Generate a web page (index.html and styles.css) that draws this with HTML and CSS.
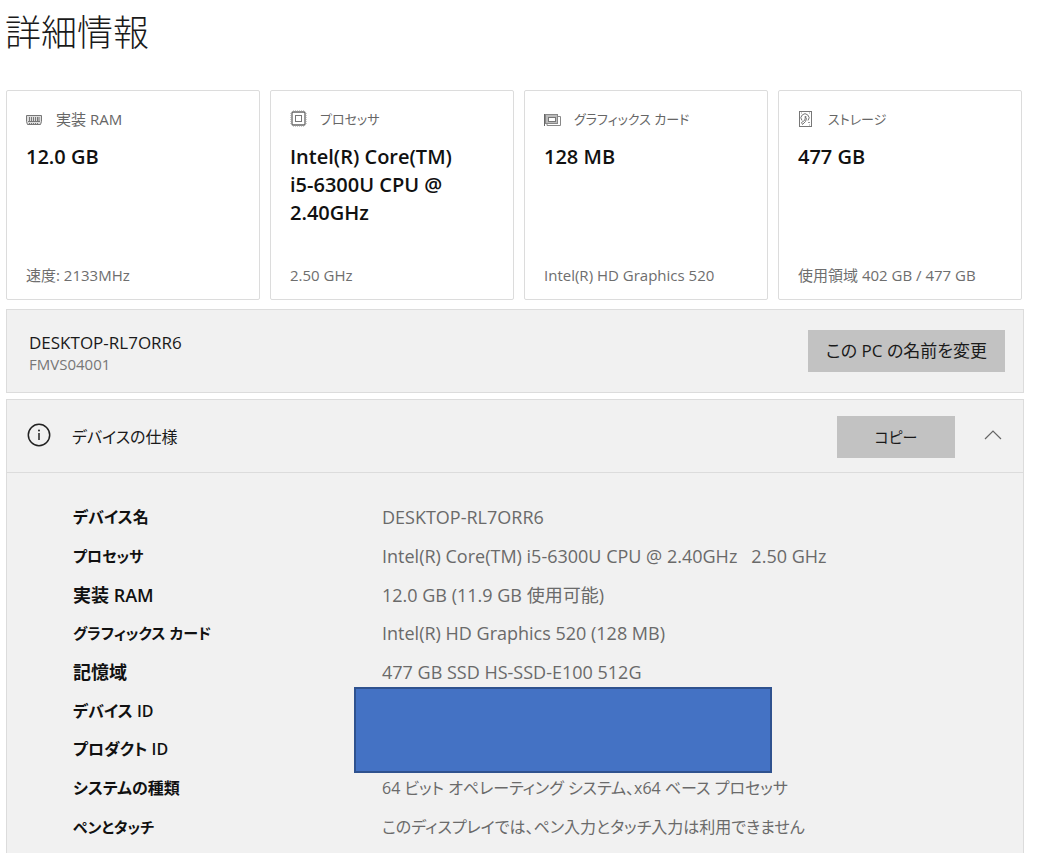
FILE: index.html
```html
<!DOCTYPE html>
<html lang="ja">
<head>
<meta charset="utf-8">
<meta name="viewport" content="width=device-width, initial-scale=1">
<title>詳細情報</title>
<link rel="stylesheet" href="styles.css">
</head>
<body>
<main class="page">
  <h1 class="title">詳細情報</h1>

  <section class="cards">
    <article class="card">
      <h2 class="card-label">
        <svg class="icon" viewBox="0 0 18 18" aria-hidden="true"><path d="M.5 5.500h15v6l-1 3h-13l-1-3z" fill="#ddd" stroke="#777"/><path d="M3.500 7v4M5.500 7v4M7.500 7v4M9.500 7v4M11.500 7v4M13 7v4M2 11.500h12M3.500 13v1M5.500 13v1M7.500 13v1M9.500 13v1M11.500 13v1" fill="none" stroke="#777"/></svg>
        <span>実装 RAM</span>
      </h2>
      <p class="card-value">12.0 GB</p>
      <p class="card-note">速度: 2133MHz</p>
    </article>
    <article class="card">
      <h2 class="card-label kana">
        <svg class="icon" viewBox="0 0 18 18" aria-hidden="true"><rect x="2" y="2" width="13" height="13" rx="1" fill="none" stroke="#666" stroke-width="1.3"/><rect x="5.500" y="5.500" width="6" height="6" fill="none" stroke="#777"/><path d="M3 1h11M3 16h11M1 3v11M16 3v11" fill="none" stroke="#999" stroke-dasharray="1 1"/></svg>
        <span>プロセッサ</span>
      </h2>
      <p class="card-value">Intel(R) Core(TM)<br>i5-6300U CPU @ 2.40GHz</p>
      <p class="card-note">2.50 GHz</p>
    </article>
    <article class="card">
      <h2 class="card-label kana">
        <svg class="icon" viewBox="0 0 18 18" aria-hidden="true"><path d="M.5 4v12" fill="none" stroke="#666"/><rect x="1.500" y="4.500" width="12" height="9" fill="#bbb" stroke="#888"/><rect x="4.500" y="7.500" width="7" height="4" fill="#fff" stroke="#777"/><path d="M14 6.500h2.500v9H3V14" fill="none" stroke="#888"/></svg>
        <span>グラフィックス カード</span>
      </h2>
      <p class="card-value">128 MB</p>
      <p class="card-note">Intel(R) HD Graphics 520</p>
    </article>
    <article class="card">
      <h2 class="card-label kana">
        <svg class="icon" viewBox="0 0 18 18" aria-hidden="true"><rect x="1.500" y="1.500" width="12" height="15" fill="none" stroke="#777"/><path d="M4 10.500A4 4 0 1 1 10 10.500M7.500 7.500l1 1-1 3-3 3-1-2 3-2z" fill="none" stroke="#777"/><circle cx="7.500" cy="7" r="1" fill="#777"/><path d="M10 12.500h2M3 3h1M11 3h1M11 15h1" stroke="#999"/></svg>
        <span>ストレージ</span>
      </h2>
      <p class="card-value">477 GB</p>
      <p class="card-note">使用領域 402 GB / 477 GB</p>
    </article>
  </section>

  <section class="panel name-panel">
    <div class="pc">
      <p class="pc-name">DESKTOP-RL7ORR6</p>
      <p class="pc-model">FMVS04001</p>
    </div>
    <button class="button rename" type="button">この PC の名前を変更</button>
  </section>

  <section class="panel">
    <header class="spec-header">
      <svg class="info" viewBox="0 0 24 24" aria-hidden="true"><circle cx="12" cy="12" r="10.700" fill="none" stroke="#222" stroke-width="1.500"/><path d="M12 10v7" stroke="#222" stroke-width="1.500"/><circle cx="12" cy="7.500" r="1" fill="#222"/></svg>
      <h2 class="spec-title">デバイスの仕様</h2>
      <button class="button copy" type="button">コピー</button>
      <button class="collapse" type="button" aria-label="折りたたむ">
        <svg class="chevron" viewBox="0 0 18 10" aria-hidden="true"><path d="M1 9l8-8 8 8" fill="none" stroke="#666" stroke-width="1.200"/></svg>
      </button>
    </header>
    <table class="specs">
      <tbody>
        <tr><th scope="row" class="mixed">デバイス名</th><td>DESKTOP-RL7ORR6</td></tr>
        <tr><th scope="row" class="kana">プロセッサ</th><td>Intel(R) Core(TM) i5-6300U CPU @ 2.40GHz&nbsp;&nbsp; 2.50 GHz</td></tr>
        <tr><th scope="row">実装 RAM</th><td>12.0 GB (11.9 GB 使用可能)</td></tr>
        <tr><th scope="row" class="kana">グラフィックス カード</th><td>Intel(R) HD Graphics 520 (128 MB)</td></tr>
        <tr><th scope="row">記憶域</th><td>477 GB SSD HS-SSD-E100 512G</td></tr>
        <tr><th scope="row" class="mixed">デバイス ID</th><td rowspan="2" class="masked"><div class="mask"></div></td></tr>
        <tr><th scope="row" class="mixed">プロダクト ID</th></tr>
        <tr><th scope="row" class="mixed">システムの種類</th><td class="mixed">64 ビット オペレーティング システム、x64 ベース プロセッサ</td></tr>
        <tr><th scope="row" class="kana">ペンとタッチ</th><td class="mixed">このディスプレイでは、ペン入力とタッチ入力は利用できません</td></tr>
      </tbody>
    </table>
  </section>
</main>
</body>
</html>
```
FILE: styles.css
```css
* {
  box-sizing: border-box;
}

body {
  margin: 0;
  background: #fff;
  color: #1a1a1a;
  font-family: "Open Sans", "Noto Sans CJK JP", sans-serif;
  font-size: 17px;
  line-height: 24px;
  font-feature-settings: "palt";
}

h1, h2, p {
  margin: 0;
  font-weight: 400;
}

.page {
  padding: 9px 26px 0 5px;
}

.title {
  margin-bottom: 33px;
  font-size: 36px;
  font-weight: 300;
  line-height: 48px;
}

.cards {
  display: grid;
  grid-template-columns: 254fr 244fr 244fr 244fr;
  gap: 10px;
  margin: 0 2px 0 1px;
}

.card {
  display: flex;
  flex-direction: column;
  min-height: 210px;
  padding: 16px 20px 12px 19px;
  border: 1px solid #dcdcdc;
  border-radius: 2px;
}

.card-label {
  display: flex;
  align-items: center;
  gap: 12px;
  color: #666;
  font-size: 15px;
  line-height: 24px;
}

.card-label.kana {
  font-size: 13px;
}

.icon {
  flex: none;
  width: 18px;
  height: 18px;
}

.card-value {
  margin-top: 12px;
  color: #111;
  font-size: 20px;
  font-weight: 600;
  line-height: 28px;
}

.card-note {
  margin-top: auto;
  color: #6e6e6e;
  font-size: 15px;
}

.panel {
  margin-left: 1px;
  border: 1px solid #dcdcdc;
  background: #f1f1f1;
}

.name-panel {
  display: flex;
  align-items: center;
  justify-content: space-between;
  margin-top: 9px;
  margin-bottom: 6px;
  padding: 18px 18px 18px 22px;
}

.pc {
  padding-top: 4px;
}

.pc-name {
  line-height: 22px;
}

.pc-model {
  color: #777;
  font-size: 15px;
  line-height: 20px;
}

.button {
  height: 42px;
  padding: 0 18px;
  border: 0;
  background: #c2c2c2;
  color: #1a1a1a;
  font: inherit;
}

.copy {
  width: 118px;
  font-size: 15px;
}

.spec-header {
  display: flex;
  align-items: center;
  padding: 16px 21px 14px 20px;
  border-bottom: 1px solid #dcdcdc;
}

.info {
  width: 24px;
  height: 24px;
  margin-bottom: 4px;
}

.spec-title {
  flex: 1;
  margin-left: 21px;
  font-size: 16px;
}

.collapse {
  display: flex;
  margin: 0 0 4px 29px;
  padding: 0;
  border: 0;
  background: none;
}

.chevron {
  width: 18px;
  height: 10px;
}

.specs {
  width: 100%;
  height: 348px;
  margin: 25px 0 7px;
  border-collapse: collapse;
}

.specs th,
.specs td {
  padding: 0;
  font-size: 18px;
  text-align: left;
}

.specs th {
  width: 375px;
  padding-left: 66px;
  color: #111;
  font-weight: 600;
}

.specs td {
  color: #6a6a6a;
}

.specs .mixed {
  font-size: 16px;
}

.specs .kana {
  font-size: 15px;
}

.specs .masked {
  position: relative;
}

.mask {
  position: absolute;
  top: -4px;
  left: -28px;
  width: 418px;
  height: 86px;
  border: 2px solid #2f528f;
  background: #4472c4;
}
```
